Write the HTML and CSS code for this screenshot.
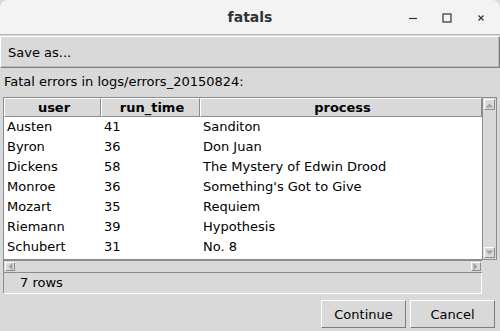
FILE: index.html
```html
<!DOCTYPE html>
<html lang="en">
<head>
  <meta charset="UTF-8" />
  <title>fatals</title>
  <link rel="stylesheet" href="styles.css">
</head>
<body>
  <div class="window">
    <div class="titlebar">
      <span class="title">fatals</span>
      <div class="controls">
        <svg class="ctl" width="10" height="10" viewBox="0 0 10 10"><path d="M1 5.5h8" stroke="#2e3436" stroke-width="1.2"/></svg>
        <svg class="ctl" width="10" height="10" viewBox="0 0 10 10"><rect x="1" y="1" width="8" height="8" fill="none" stroke="#2e3436" stroke-width="1.2"/></svg>
        <svg class="ctl" width="10" height="10" viewBox="0 0 10 10"><path d="M2.5 2.5l5 5M7.5 2.5l-5 5" stroke="#2e3436" stroke-width="1.2"/></svg>
      </div>
    </div>
    <button class="menu-btn">Save as...</button>
    <div class="caption">Fatal errors in logs/errors_20150824:</div>
    <div class="table-wrap">
      <div class="tree">
        <div class="row head">
          <div class="cell c-user">user</div>
          <div class="cell c-time">run_time</div>
          <div class="cell c-proc">process</div>
        </div>
        <div class="row"><div class="cell c-user">Austen</div><div class="cell c-time">41</div><div class="cell c-proc">Sanditon</div></div>
        <div class="row"><div class="cell c-user">Byron</div><div class="cell c-time">36</div><div class="cell c-proc">Don Juan</div></div>
        <div class="row"><div class="cell c-user">Dickens</div><div class="cell c-time">58</div><div class="cell c-proc">The Mystery of Edwin Drood</div></div>
        <div class="row"><div class="cell c-user">Monroe</div><div class="cell c-time">36</div><div class="cell c-proc">Something's Got to Give</div></div>
        <div class="row"><div class="cell c-user">Mozart</div><div class="cell c-time">35</div><div class="cell c-proc">Requiem</div></div>
        <div class="row"><div class="cell c-user">Riemann</div><div class="cell c-time">39</div><div class="cell c-proc">Hypothesis</div></div>
        <div class="row"><div class="cell c-user">Schubert</div><div class="cell c-time">31</div><div class="cell c-proc">No. 8</div></div>
      </div>
      <div class="vscroll">
        <div class="arrow"><svg width="9" height="6" viewBox="0 0 9 6"><path d="M0.5 5.5L4.5 1.5L8.5 5.5Z" fill="#a3a3a3"/></svg></div>
        <div class="trough"></div>
        <div class="arrow"><svg width="9" height="6" viewBox="0 0 9 6"><path d="M0.5 0.5L4.5 4.5L8.5 0.5Z" fill="#a3a3a3"/></svg></div>
      </div>
      <div class="hscroll">
        <div class="arrow"><svg width="6" height="9" viewBox="0 0 6 9"><path d="M5.5 0.5L1.5 4.5L5.5 8.5Z" fill="#a3a3a3"/></svg></div>
        <div class="trough"></div>
        <div class="arrow"><svg width="6" height="9" viewBox="0 0 6 9"><path d="M0.5 0.5L4.5 4.5L0.5 8.5Z" fill="#a3a3a3"/></svg></div>
      </div>
      <div class="corner"></div>
      <div class="status">7 rows</div>
    </div>
    <div class="actions">
      <button class="btn">Continue</button>
      <button class="btn">Cancel</button>
    </div>
  </div>
</body>
</html>
```

FILE: styles.css
```css
body {
  margin: 0;
  font-family: "DejaVu Sans", sans-serif;
  font-size: 13px;
  color: #000;
  background-color: #d9d9d9;
}

.window {
  width: 500px;
  height: 331px;
  display: flex;
  flex-direction: column;
  background-color: #d9d9d9;
  overflow: hidden;
}

.titlebar {
  height: 34px;
  flex: 0 0 34px;
  background-color: #f3f3f3;
  border-bottom: 1px solid #b8b8b8;
  border-radius: 8px 8px 0 0;
  display: flex;
  align-items: center;
  justify-content: center;
  position: relative;
}

.title {
  font-weight: bold;
  font-size: 14px;
  color: #2e3436;
}

.controls {
  position: absolute;
  right: 14px;
  top: 13px;
  display: flex;
  gap: 24px;
}

.ctl {
  display: block;
}

.menu-btn {
  margin: 1px 0 0 0;
  height: 32px;
  flex: 0 0 32px;
  font: inherit;
  text-align: left;
  padding: 0 7px;
  background-color: #d9d9d9;
  border: 1px solid;
  border-color: #ffffff #7d7d7d #7d7d7d #ffffff;
  box-shadow: inset -1px -1px 0 #bdbdbd;
}

.caption {
  height: 29px;
  box-sizing: border-box;
  padding: 1px 0 0 4px;
  line-height: 26px;
}

.table-wrap {
  margin: 0 3px 0 3px;
  display: grid;
  grid-template-columns: 479px 15px;
  grid-template-rows: 163px 13px 21px;
}

.tree {
  background-color: #fff;
  border: 1px solid #8c8c8c;
  border-right: none;
  overflow: hidden;
}

.row {
  display: flex;
  height: 20px;
  line-height: 20px;
}

.row.head {
  height: 19px;
  line-height: 18px;
  font-weight: bold;
  background-color: #d9d9d9;
}

.cell {
  padding-left: 3px;
  white-space: nowrap;
  box-sizing: border-box;
}

.head .cell {
  text-align: center;
  border: 1px solid;
  border-color: #ffffff #8c8c8c #8c8c8c #ffffff;
}

.c-user {
  width: 97px;
}

.c-time {
  width: 99px;
}

.c-proc {
  flex: 1;
}

.vscroll {
  display: flex;
  flex-direction: column;
  border: 1px solid #8c8c8c;
  background-color: #d9d9d9;
  padding: 1px;
}

.hscroll {
  display: flex;
  border: 1px solid #8c8c8c;
  border-right: none;
  background-color: #d9d9d9;
  padding: 1px;
}

.trough {
  flex: 1;
}

.arrow {
  display: flex;
  align-items: center;
  justify-content: center;
  background-color: #d9d9d9;
  border: 1px solid;
  border-color: #ffffff #8c8c8c #8c8c8c #ffffff;
}

.vscroll .arrow {
  height: 9px;
}

.hscroll .arrow {
  width: 8px;
}

.corner {
  background-color: #d9d9d9;
}

.status {
  grid-column: 1;
  border-left: 1px solid #8c8c8c;
  border-right: 1px solid #ffffff;
  border-bottom: 1px solid #ffffff;
  padding-left: 16px;
  line-height: 20px;
}

.actions {
  display: flex;
  justify-content: flex-end;
  gap: 4px;
  padding: 6px 5px 0 0;
}

.btn {
  width: 85px;
  height: 28px;
  font: inherit;
  background-color: #d9d9d9;
  border: 1px solid;
  border-color: #ffffff #7d7d7d #7d7d7d #ffffff;
  padding: 0;
}
```
